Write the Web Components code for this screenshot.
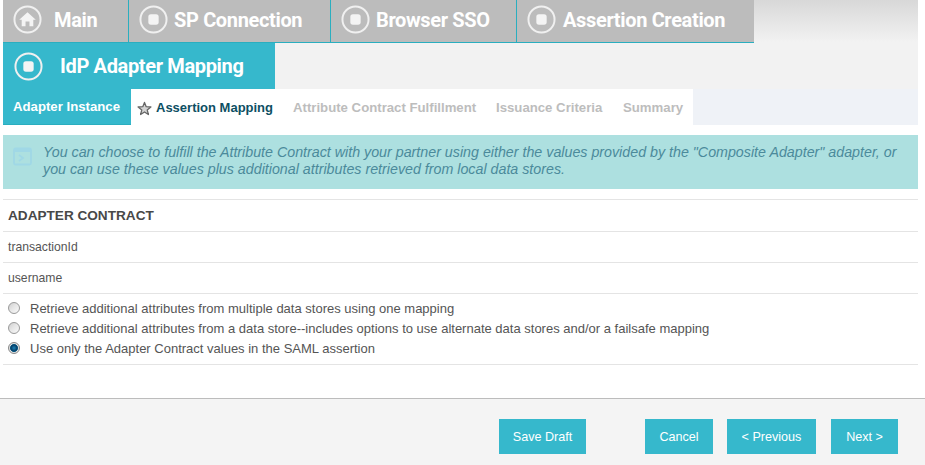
<!DOCTYPE html>
<html>
<head>
<meta charset="utf-8">
<title>IdP Adapter Mapping</title>
<style>
  html, body { margin: 0; padding: 0; background: #fff; }
  body { width: 925px; height: 465px; overflow: hidden; font-family: "Liberation Sans", Arial, sans-serif; }
</style>
</head>
<body>
<wizard-page>
  <wizard-head>
    <div slot="crumbs">
      <crumb-tab icon="home" width="126" gap="12">Main</crumb-tab><crumb-tab width="202" gap="6">SP Connection</crumb-tab><crumb-tab width="186" gap="6">Browser SSO</crumb-tab><crumb-tab last width="237" gap="7">Assertion Creation</crumb-tab>
    </div>
    <crumb-tab slot="current" current width="272" gap="17">IdP Adapter Mapping</crumb-tab>
    <step-tab slot="steps" done width="128">Adapter Instance</step-tab>
    <step-tab slot="steps" active width="162">Assertion Mapping</step-tab>
    <step-tab slot="steps" width="203">Attribute Contract Fulfillment</step-tab>
    <step-tab slot="steps" width="127">Issuance Criteria</step-tab>
    <step-tab slot="steps" width="70">Summary</step-tab>
  </wizard-head>
  <info-box>You can choose to fulfill the Attribute Contract with your partner using either the values provided by the "Composite Adapter" adapter, or you can use these values plus additional attributes retrieved from local data stores.</info-box>
  <data-row head>ADAPTER CONTRACT</data-row>
  <data-row>transactionId</data-row>
  <data-row>username</data-row>
  <radio-group>
    <radio-row>Retrieve additional attributes from multiple data stores using one mapping</radio-row>
    <radio-row>Retrieve additional attributes from a data store--includes options to use alternate data stores and/or a failsafe mapping</radio-row>
    <radio-row checked>Use only the Adapter Contract values in the SAML assertion</radio-row>
  </radio-group>
  <wizard-footer>
    <action-button slot="left" width="87">Save Draft</action-button>
    <action-button width="68">Cancel</action-button>
    <action-button width="89">&lt; Previous</action-button>
    <action-button width="67" style="margin-left:1px">Next &gt;</action-button>
  </wizard-footer>
</wizard-page>

<script>
// small helper so every element is written the same way
function shadow(el, html) {
  el.attachShadow({ mode: "open" });
  el.shadowRoot.innerHTML = html;
}

class WizardPage extends HTMLElement {
  constructor() {
    super();
    shadow(this, `
    <style>
      :host { display: block; }
      #body { padding: 0 7px 0 3px; }
    </style>
    <div id="body"><slot></slot></div>
    <slot name="footer"></slot>`);
  }
}

class WizardHead extends HTMLElement {
  constructor() {
    super();
    shadow(this, `
    <style>
      :host { display: block; background: linear-gradient(#d8d8d8 0, #f2f2f2 42px, #f2f2f2 100%); }
      #crumbs { height: 43px; }
      #current { display: flex; height: 46px; }
      #steps { display: flex; height: 36px; background: #eff2f7; }
    </style>
    <div id="crumbs"><slot name="crumbs"></slot></div>
    <div id="current"><slot name="current"></slot></div>
    <div id="steps"><slot name="steps"></slot></div>`);
  }
}

const ICONS = {
  stop: `<rect x="9" y="9" width="10" height="10" rx="2.5" fill="#f4f4f4"/>`,
  home: `<path d="M14 7 L22 14.2 H19.6 V20.4 H15.9 V16 H12.1 V20.4 H8.4 V14.2 H6 Z" fill="#f4f4f4"/>`
};

class CrumbTab extends HTMLElement {
  constructor() {
    super();
    const icon = ICONS[this.getAttribute("icon")] || ICONS.stop;
    const cur = this.hasAttribute("current");
    const last = this.hasAttribute("last");
    shadow(this, `
    <style>
      :host {
        display: inline-flex;
        box-sizing: border-box;
        width: ${this.getAttribute("width")}px;
        height: ${cur ? 46 : 43}px;
        vertical-align: top;
        align-items: ${cur ? "center" : "flex-start"};
        padding-left: ${cur ? 11 : 10}px;
        padding-top: ${cur ? 0 : 5}px;
        background: ${cur ? "#36b8cc" : "#bcbcbc"};
        ${cur ? "" : "border-bottom: 1px solid #2aaebf;"}
        ${cur || last ? "" : "border-right: 1px solid #2aaebf;"}
        color: #fff;
        font: 700 20px/29px Roboto, sans-serif;
        white-space: nowrap;
      }
      svg { flex: none; display: block; width: 29px; height: 29px; margin-right: ${this.getAttribute("gap")}px; }
      span { display: block; letter-spacing: -0.35px; margin-top: ${cur ? 0 : 1}px; }
    </style>
    <svg viewBox="0 0 28 28"><circle cx="14" cy="14" r="12.6" fill="none" stroke="#f0f0f0" stroke-width="1.9"/>${icon}</svg>
    <span><slot></slot></span>`);
  }
}

class StepTab extends HTMLElement {
  constructor() {
    super();
    const done = this.hasAttribute("done");
    const active = this.hasAttribute("active");
    shadow(this, `
    <style>
      :host {
        display: flex;
        box-sizing: border-box;
        width: ${this.getAttribute("width")}px;
        align-items: center;
        padding-left: ${done ? 10 : active ? 6 : 0}px;
        background: ${done ? "#36b8cc" : "#fff"};
        ${done ? "border-bottom: 1px solid #2aaebf; height: 36px;" : ""}
        color: ${done ? "#fff" : active ? "#0d4f63" : "#bdbdbd"};
        font: bold ${active ? 13 : 13.2}px "Liberation Sans", sans-serif;
        white-space: nowrap;
      }
      svg { display: block; width: 15px; height: 15px; margin-right: 4px; margin-top: 2px; }
    </style>
    ${active ? `<svg viewBox="0 0 15 15"><path d="M7.5 1.4 L9.2 5.7 L13.9 6 L10.2 8.9 L11.4 13.5 L7.5 11 L3.6 13.5 L4.8 8.9 L1.1 6 L5.8 5.7 Z" fill="#d4d4d4" stroke="#666" stroke-width="1.3" stroke-linejoin="round"/></svg>` : ""}
    <slot></slot>`);
  }
}

class InfoBox extends HTMLElement {
  constructor() {
    super();
    shadow(this, `
    <style>
      :host {
        display: flex;
        margin: 10px 0;
        height: 54px;
        box-sizing: border-box;
        padding: 9px 10px 0 10px;
        background: #ade0e0;
        color: #4b8a9b;
        font: italic 14.25px/17px "Liberation Sans", sans-serif;
      }
      svg { flex: none; width: 19px; height: 19px; margin: 3px 11px 0 0; }
    </style>
    <svg viewBox="0 0 19 19"><rect x="1" y="1.5" width="17" height="16" rx="1.5" fill="none" stroke="#a0d8e6" stroke-width="1.8"/><rect x="1" y="1.5" width="17" height="3.5" fill="#a0d8e6"/><path d="M6 8 L10 11 L6 14" fill="none" stroke="#a0d8e6" stroke-width="1.8"/></svg>
    <div><slot></slot></div>`);
  }
}

class DataRow extends HTMLElement {
  constructor() {
    super();
    const head = this.hasAttribute("head");
    shadow(this, `
    <style>
      :host {
        display: flex;
        box-sizing: border-box;
        height: 31px;
        align-items: center;
        padding: 0 5px;
        border-top: 1px solid #e4e4e4;
        color: ${head ? "#484848" : "#555"};
        font: ${head ? "bold 13.6px" : "normal 12.2px"} "Liberation Sans", sans-serif;
        ${head ? "height: 32px;" : ""}
      }
    </style>
    <slot></slot>`);
  }
}

class RadioGroup extends HTMLElement {
  constructor() {
    super();
    shadow(this, `
    <style>
      :host {
        display: flex;
        flex-direction: column;
        box-sizing: border-box;
        height: 72px;
        padding-top: 4px;
        border-top: 1px solid #e4e4e4;
        border-bottom: 1px solid #e4e4e4;
      }
    </style>
    <slot></slot>`);
  }
}

class RadioRow extends HTMLElement {
  constructor() {
    super();
    const on = this.hasAttribute("checked");
    shadow(this, `
    <style>
      :host {
        display: flex;
        height: 20px;
        align-items: center;
        padding-left: 5px;
        color: #555;
        font: 13px "Liberation Sans", sans-serif;
      }
      i {
        flex: none;
        box-sizing: border-box;
        width: 12px;
        height: 12px;
        margin: -1px 10px 0 0;
        border-radius: 50%;
        border: 1px solid #9a9a9a;
        background: linear-gradient(135deg, #d0d0d0 0, #e6e6e6 45%, #fafafa 100%);
      }
      i.on {
        border-color: #888;
        background: radial-gradient(circle, #1b84b8 0, #06406a 42%, #0a5c86 52%, #dedede 60%, #e8e8e8 100%);
      }
    </style>
    <i class="${on ? "on" : ""}"></i><slot></slot>`);
  }
}

class WizardFooter extends HTMLElement {
  constructor() {
    super();
    this.setAttribute("slot", "footer");
    shadow(this, `
    <style>
      :host {
        display: flex;
        box-sizing: border-box;
        height: 67px;
        margin-top: 33px;
        padding: 20px 27px 0 499px;
        border-top: 1px solid #bcbcbc;
        background: #f4f4f4;
        gap: 14px;
      }
      #left { display: block; margin-right: 45px; }
    </style>
    <div id="left"><slot name="left"></slot></div>
    <slot></slot>`);
  }
}

class ActionButton extends HTMLElement {
  constructor() {
    super();
    shadow(this, `
    <style>
      :host {
        display: flex;
        box-sizing: border-box;
        width: ${this.getAttribute("width")}px;
        height: 35px;
        align-items: center;
        justify-content: center;
        background: #36b8cc;
        color: #fff;
        font: 12.6px "Liberation Sans", sans-serif;
      }
    </style>
    <slot></slot>`);
  }
}

customElements.define("wizard-page", WizardPage);
customElements.define("wizard-head", WizardHead);
customElements.define("crumb-tab", CrumbTab);
customElements.define("step-tab", StepTab);
customElements.define("info-box", InfoBox);
customElements.define("data-row", DataRow);
customElements.define("radio-group", RadioGroup);
customElements.define("radio-row", RadioRow);
customElements.define("wizard-footer", WizardFooter);
customElements.define("action-button", ActionButton);
</script>
</body>
</html>
